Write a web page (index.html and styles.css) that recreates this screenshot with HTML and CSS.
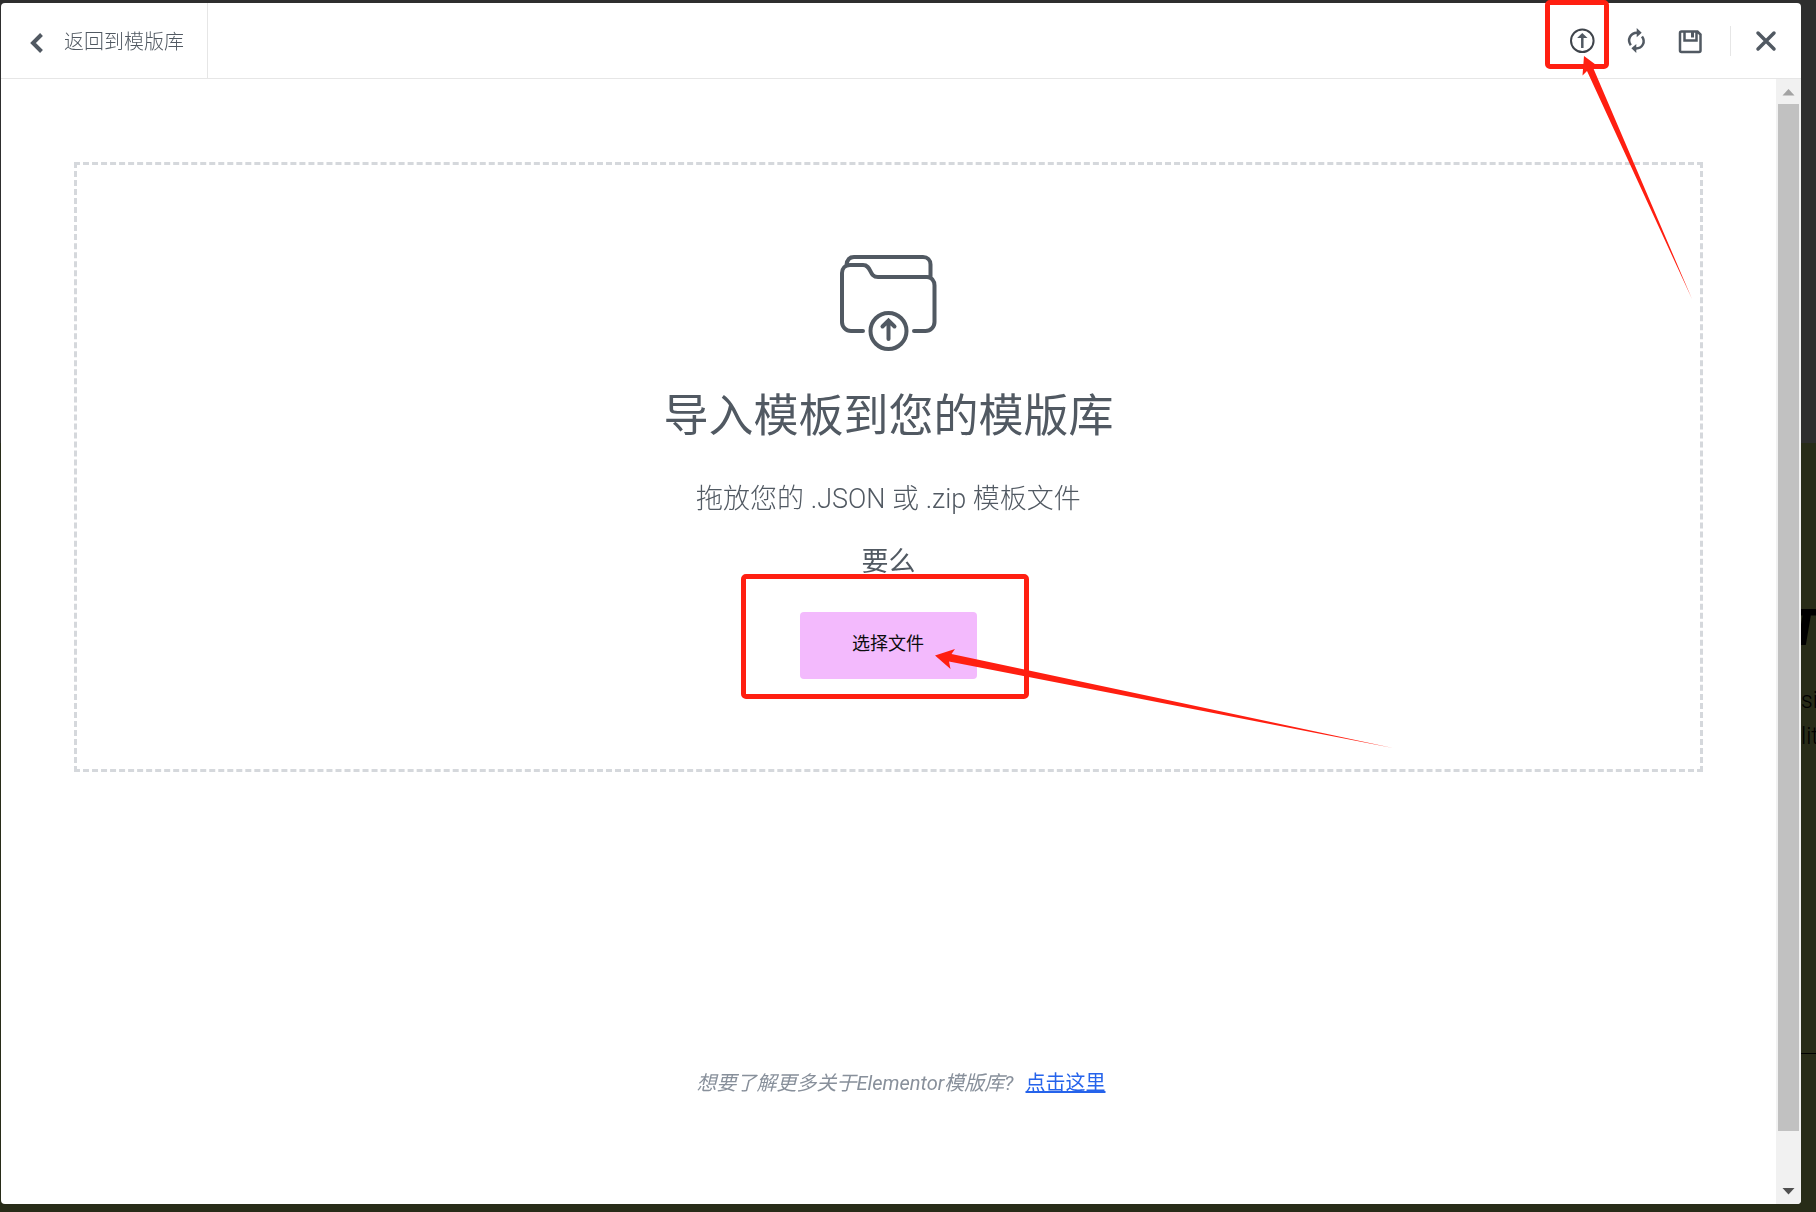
FILE: index.html
```html
<!DOCTYPE html>
<html lang="zh-CN">
<head>
<meta charset="utf-8">
<meta name="viewport" content="width=device-width, initial-scale=1">
<title>导入模板</title>
<link rel="stylesheet" href="styles.css">
</head>
<body>
<div class="backdrop" aria-hidden="true">
  <div class="backdrop-top"></div>
  <div class="backdrop-main">
    <div class="backdrop-title">T</div>
    <div class="backdrop-text">si</div>
    <div class="backdrop-text">lit</div>
    <div class="backdrop-rule"></div>
  </div>
</div>

<div class="modal" role="dialog" aria-label="模版库">
  <header class="header">
    <button class="back" type="button">
      <svg class="chevron" viewBox="0 0 14 22"><path d="M11.500 2.500 3 11l8.500 8.500"/></svg>
      <span>返回到模版库</span>
    </button>
    <div class="tools">
      <div class="callout-anchor">
        <button class="tool" type="button" aria-label="导入模板">
          <svg viewBox="0 0 24 24"><circle cx="12.300" cy="11.800" r="11.300"/><path d="M12.300 19V7"/><path class="fill" d="M12.300 4 17.500 9H7.100z"/></svg>
        </button>
        <span class="mark mark-upload"></span>
        <svg class="arrow arrow-upload" viewBox="0 0 112 246"><path d="M4 1 15.500 9.500 13 12.500 112 244 7 16 2.500 20.500z"/></svg>
      </div>
      <button class="tool" type="button" aria-label="同步">
        <svg viewBox="0 0 24 24"><path d="M6.800 16.200C2.800 10.500 6.500 3.800 13 3.700M18 7.500c4 5.500.3 11.900-6 11.900"/><path class="fill" d="M12.700-1 17.700 3.700 12.700 8.300zM12.300 15 7.400 19.300 12.300 24z"/></svg>
      </button>
      <button class="tool" type="button" aria-label="保存">
        <svg viewBox="0 0 24 24"><path d="M3.500 2.500H19.500l3 3v16a1.500 1.500 0 0 1-1.500 1.500H3.500A1.500 1.500 0 0 1 2 21.500v-17.500A1.500 1.500 0 0 1 3.500 2.500zM6.500 2.500v9h12V2.500"/><path class="slot" d="M14.500 2.500v6"/></svg>
      </button>
      <span class="tools-divider"></span>
      <button class="tool" type="button" aria-label="关闭">
        <svg class="close" viewBox="0 0 24 24"><path d="m4 4 16 16M20 4 4 20"/></svg>
      </button>
    </div>
  </header>

  <div class="body">
    <main class="content">
      <section class="dropzone">
        <svg class="folder" viewBox="0 0 98 98"><path d="M6.500 10C7 5 9.500 2 14 2h69c4.500 0 7.500 3 7.500 7.500V22M23 76H11c-5 0-9-4-9-9V18c0-4.500 3-8 8-8h13c9 0 5.500 12 15 12h49c4.500 0 7.500 4 7.500 8.500V67c0 5-4 9-9 9H74"/><circle cx="48.500" cy="76" r="18"/><path d="M48.500 84V67M42.500 71.500l6-6 6 6"/></svg>
        <h1>导入模板到您的模版库</h1>
        <p class="drag">拖放您的 .JSON 或 .zip 模板文件</p>
        <p class="or">要么</p>
        <div class="callout-anchor">
          <button class="choose" type="button">选择文件</button>
          <span class="mark mark-choose"></span>
          <svg class="arrow arrow-choose" viewBox="0 0 458 100"><path d="M0 6.500 20 0 16.500 5 458 99 14 12.500 15.500 20z"/></svg>
        </div>
      </section>
      <p class="more"><em>想要了解更多关于Elementor模版库?</em><a href="#">点击这里</a></p>
    </main>
    <div class="scrollbar" aria-hidden="true">
      <svg class="cap up" viewBox="0 0 25 25"><path d="M6.500 16.500 12.500 10l6 6.500z"/></svg>
      <div class="thumb"></div>
      <svg class="cap" viewBox="0 0 25 25"><path d="M6.500 9h12l-6 6.500z"/></svg>
    </div>
  </div>
</div>
</body>
</html>
```

FILE: styles.css
```css
* {
  box-sizing: border-box;
}

body {
  margin: 0;
  min-height: 100vh;
  overflow: hidden;
  color: #515962;
  font-family: Roboto, "Noto Sans CJK SC", sans-serif;
  font-size: 20px;
}

h1,
p {
  margin: 0;
}

button {
  padding: 0;
  border: 0;
  background: none;
  color: inherit;
  font: inherit;
  cursor: pointer;
}

svg {
  display: block;
  overflow: visible;
  fill: none;
  stroke: #515962;
}

/* Dimmed page behind the dialog */
.backdrop {
  display: flex;
  flex-direction: column;
  height: 100vh;
  overflow: hidden;
  color: #000;
  white-space: nowrap;
}

.backdrop-top {
  flex: 0 0 443px;
  background: #2e2e2e;
}

.backdrop-main {
  flex: 1;
  padding: 160px 0 0 calc(100% - 15px);
  background: #282c18;
}

.backdrop-title {
  margin-left: -12px;
  font-size: 50px;
  font-style: italic;
  font-weight: 900;
  line-height: 50px;
}

.backdrop-text {
  font-size: 23px;
  font-weight: 300;
  line-height: 36px;
}

.backdrop-title + .backdrop-text {
  margin-top: 30px;
}

.backdrop-rule {
  margin-top: 298px;
  border-top: 1px solid #000;
}

/* Dialog */
.modal {
  position: fixed;
  inset: 3px 15px 8px 1px;
  display: flex;
  flex-direction: column;
  border-radius: 4px;
  background: #fff;
}

.header {
  display: flex;
  flex: 0 0 76px;
  justify-content: space-between;
  border-bottom: 1px solid #e6e6e6;
}

.back {
  display: flex;
  align-items: center;
  gap: 20px;
  padding: 0 23px 0 29px;
  border-right: 1px solid #e6e6e6;
  font-weight: 300;
}

.chevron {
  width: 14px;
  height: 22px;
  margin-top: 4px;
  stroke-width: 4;
}

.tools {
  display: flex;
  align-items: center;
  gap: 30px;
  padding-right: 23px;
}

.tool,
.tool svg {
  width: 24px;
  height: 24px;
}

.tool svg {
  stroke-width: 2.500;
}

.tool circle {
  stroke: #3f444b;
  stroke-width: 2;
}

.tool .fill {
  fill: #515962;
  stroke: none;
}

.tool .slot {
  stroke-width: 3;
}

.tool .close {
  stroke-width: 3.500;
  stroke-linecap: round;
}

.tools-divider {
  width: 1px;
  height: 30px;
  margin: 0 -7px 0 -2px;
  background: #e6e6e6;
}

.body {
  display: flex;
  flex: 1;
  min-height: 0;
}

.content {
  flex: 1;
  padding: 83px 73px 0;
}

.dropzone {
  display: flex;
  flex-direction: column;
  align-items: center;
  padding: 90px 0;
  border: 3px dashed #d5d8dc;
}

.folder {
  width: 98px;
  height: 98px;
  stroke-width: 4;
  stroke-linecap: round;
}

h1 {
  margin-top: 41px;
  font-size: 45px;
  font-weight: 400;
  line-height: 45px;
}

.drag,
.or {
  font-size: 27px;
  line-height: 27px;
}

.drag {
  margin-top: 47px;
  font-weight: 300;
}

.or {
  margin: 36px 0;
}

.choose {
  display: block;
  padding: 19px 53px 22px 52px;
  border-radius: 4px;
  background: #f3bafd;
  color: #0c0d0e;
  font-size: 18px;
  line-height: 26px;
}

.more {
  padding: 301px 0 0 25px;
  color: #88909b;
  line-height: 20px;
  text-align: center;
}

.more a {
  margin-left: 12px;
  color: #2563eb;
}

/* Scrollbar column */
.scrollbar {
  display: flex;
  flex: 0 0 25px;
  flex-direction: column;
  border-radius: 0 0 4px 0;
  background: #f1f1f1;
}

.cap {
  flex: none;
  width: 25px;
  height: 25px;
  fill: #505050;
  stroke: none;
}

.up {
  fill: #a3a3a3;
}

.thumb {
  flex: 1;
  margin: 0 2px 48px;
  background: #c1c1c1;
}

/* Red callouts laid over the controls */
.callout-anchor {
  position: relative;
  z-index: 1;
  display: flex;
}

.mark,
.arrow {
  position: absolute;
  pointer-events: none;
}

.mark {
  border: 5px solid #ff1f11;
  border-radius: 5px;
}

.arrow {
  fill: #ff1f11;
  stroke: none;
}

.mark-upload {
  inset: -29px -15px -16px -25px;
}

.arrow-upload {
  top: 26px;
  left: 10px;
  width: 112px;
  height: 246px;
}

.mark-choose {
  inset: -38px -52px -20px -59px;
}

.arrow-choose {
  top: 37px;
  left: 135px;
  width: 458px;
  height: 100px;
}
```
